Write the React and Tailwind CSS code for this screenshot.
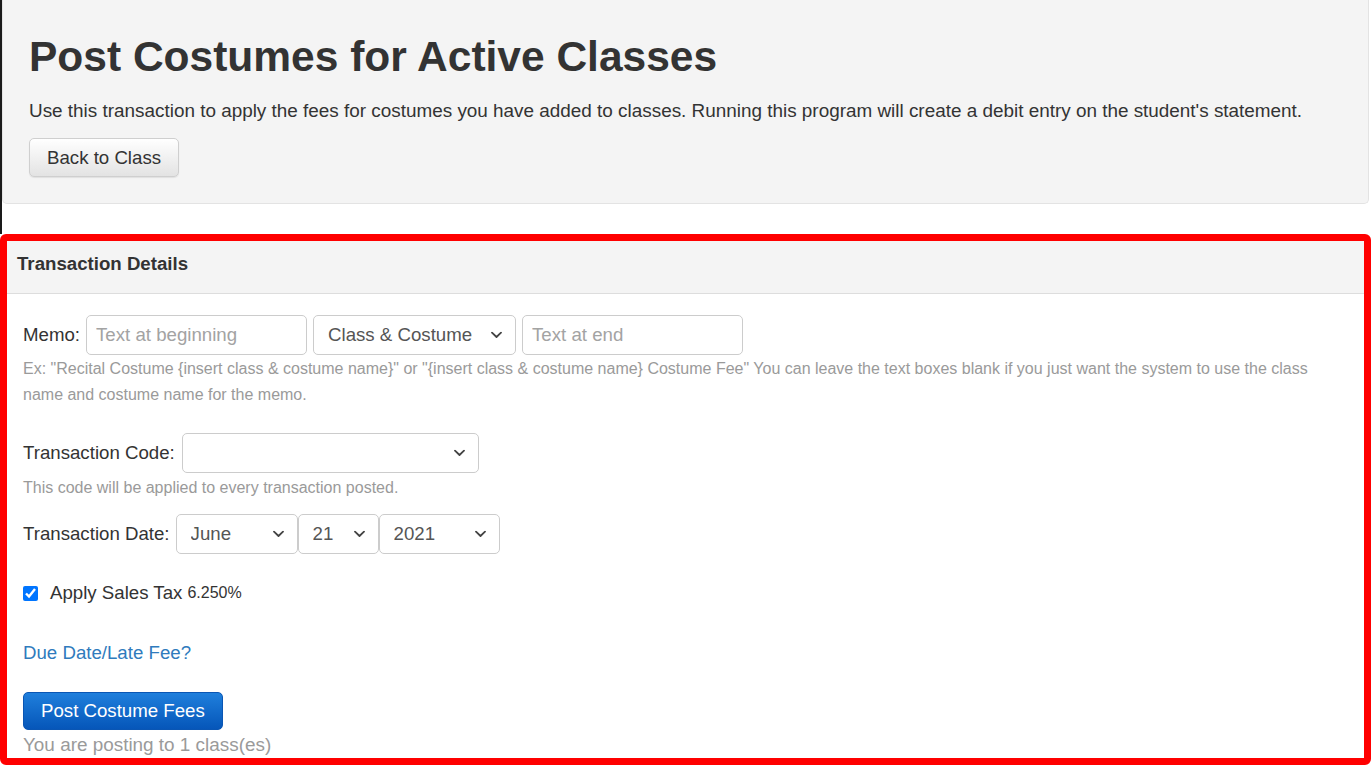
import React from "react";

function Chevron() {
  return (
    <svg
      className="pointer-events-none absolute right-[14px] top-1/2 -translate-y-1/2"
      width="11"
      height="7"
      viewBox="0 0 11 7"
      fill="none"
    >
      <path d="M1 1.2 L5.5 5.5 L10 1.2" stroke="#444" strokeWidth="1.8" strokeLinecap="round" strokeLinejoin="round" />
    </svg>
  );
}

function Select({ width, value, options = [] }) {
  return (
    <div className="relative" style={{ width }}>
      <select
        defaultValue={value}
        className="appearance-none w-full h-[40px] pl-[14px] pr-[30px] border border-[#cccccc] rounded-[5px] bg-white text-[18.67px] text-[#555555] outline-none"
      >
        {options.map((o) => (
          <option key={o}>{o}</option>
        ))}
      </select>
      <Chevron />
    </div>
  );
}

function TextInput({ width, placeholder }) {
  return (
    <input
      type="text"
      placeholder={placeholder}
      className="h-[40px] px-[9px] border border-[#cccccc] rounded-[5px] bg-white text-[18.67px] text-[#555555] placeholder:text-[#a3a3a3] outline-none"
      style={{ width }}
    />
  );
}

const memoHelp =
  'Ex: "Recital Costume {insert class & costume name}" or "{insert class & costume name} Costume Fee" You can leave the text boxes blank if you just want the system to use the class name and costume name for the memo.';

export default function App() {
  return (
    <div
      className="w-[1372px] h-[765px] overflow-hidden bg-white text-[#333333]"
      style={{ fontFamily: '"Liberation Sans", Arial, Helvetica, sans-serif' }}
    >
      <div className="border-l-[2px] border-[#1a1a1a] h-[234px]">
        <div className="h-[204px] w-[1367px] bg-[#f4f4f4] border border-t-0 border-[#e3e3e3] rounded-b-[5px] pl-[26px] pt-[32px]">
          <h1 className="text-[42.5px] leading-[50px] font-bold text-[#333333]">
            Post Costumes for Active Classes
          </h1>
          <p className="mt-[16px] text-[18.9px] leading-[26px] text-[#333333] whitespace-nowrap">
            Use this transaction to apply the fees for costumes you have added to classes. Running this program will create a debit entry on the student's statement.
          </p>
          <button className="mt-[14px] h-[39px] px-[17px] border border-[#cfcfcf] rounded-[5px] bg-gradient-to-b from-[#ffffff] to-[#e3e3e3] text-[18.67px] text-[#333333] shadow-[0_1px_1px_rgba(0,0,0,0.08)]">
            Back to Class
          </button>
        </div>
      </div>

      <div className="w-[1371px] h-[531px] border-[7px] border-[#ff0000] rounded-[6px] overflow-hidden">
        <div className="h-full bg-white">
          <div className="h-[53px] bg-[#f4f4f4] border-b border-[#dddddd] pl-[10px] pt-[10px]">
            <h3 className="text-[18.67px] leading-[26px] font-bold text-[#333333]">Transaction Details</h3>
          </div>

          <div className="pl-[16px] pt-[21px]">
            <div className="flex items-center h-[40px]">
              <span className="text-[18.67px] mr-[6px]">Memo:</span>
              <TextInput width={221} placeholder="Text at beginning" />
              <div className="ml-[6px]">
                <Select width={203} value="Class & Costume" options={["Class & Costume", "Class", "Costume"]} />
              </div>
              <div className="ml-[6px]">
                <TextInput width={221} placeholder="Text at end" />
              </div>
            </div>
            <p className="mt-[1px] text-[16px] leading-[26px] text-[#9a9a9a] pr-[40px]">{memoHelp}</p>

            <div className="flex items-center h-[40px] mt-[25px]">
              <span className="text-[18.67px] mr-[7px]">Transaction Code:</span>
              <Select width={297} value="" options={[""]} />
            </div>
            <p className="mt-[2px] text-[16px] leading-[26px] text-[#9a9a9a]">
              This code will be applied to every transaction posted.
            </p>

            <div className="flex items-center h-[40px] mt-[13px]">
              <span className="text-[18.67px] mr-[6px]">Transaction Date:</span>
              <Select width={122} value="June" options={["January","February","March","April","May","June","July","August","September","October","November","December"]} />
              <Select width={81} value="21" options={["19", "20", "21", "22"]} />
              <Select width={121} value="2021" options={["2020", "2021", "2022"]} />
            </div>

            <div className="flex items-center h-[26px] mt-[26px]">
              <input type="checkbox" defaultChecked className="w-[15px] h-[15px] m-0 accent-[#0075ff]" />
              <span className="ml-[12px] text-[18.67px]">Apply Sales Tax</span>
              <span className="ml-[5px] text-[16px]">6.250%</span>
            </div>

            <div className="mt-[34px] h-[26px] leading-[26px]">
              <a href="#" className="text-[18.67px] text-[#2f7bbd]">Due Date/Late Fee?</a>
            </div>

            <button className="mt-[26px] h-[38px] px-[17px] rounded-[5px] border border-[#0a56b4] bg-gradient-to-b from-[#1f7fdc] to-[#0656b9] text-white text-[18.67px]">
              Post Costume Fees
            </button>
            <p className="mt-[2px] text-[18.9px] leading-[26px] text-[#9a9a9a]">You are posting to 1 class(es)</p>
          </div>
        </div>
      </div>
    </div>
  );
}
